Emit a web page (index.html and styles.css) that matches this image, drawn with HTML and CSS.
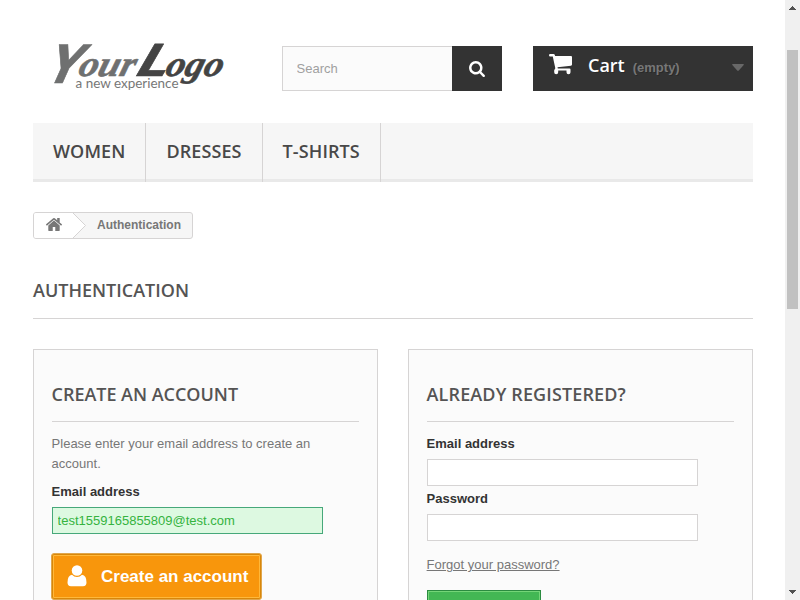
FILE: index.html
```html
<!DOCTYPE html>
<html lang="en">
<head>
<meta charset="utf-8">
<title>Login - My Store</title>
<link rel="stylesheet" href="styles.css">
</head>
<body>
<div class="page">
  <header class="header">
    <a class="logo" aria-label="YourLogo">
      <svg width="200" height="70" viewBox="0 0 200 70">
        <g class="logo-your">
          <text class="logo-cap" transform="translate(9 53) skewX(-24)" font-size="54" textLength="33" lengthAdjust="spacingAndGlyphs">Y</text>
          <text class="logo-low" transform="translate(44 46) skewX(-16)" textLength="56" lengthAdjust="spacingAndGlyphs">our</text>
        </g>
        <g class="logo-logo">
          <text class="logo-cap logo-l" transform="translate(98 46) skewX(-30)" font-size="45" textLength="33" lengthAdjust="spacingAndGlyphs">L</text>
          <text class="logo-low" transform="translate(131 46) skewX(-16)" textLength="57" lengthAdjust="spacingAndGlyphs">ogo</text>
        </g>
        <text class="logo-tag" x="42.500" y="58" textLength="103" lengthAdjust="spacingAndGlyphs">a new experience</text>
      </svg>
    </a>
    <form class="search">
      <input class="search-input" type="text" placeholder="Search">
      <button class="search-button" type="button" aria-label="Search">
        <svg width="16" height="16" viewBox="60 120 1670 1672"><path fill="#fff" d="M1216 832q0-185-131.500-316.500t-316.500-131.500-316.500 131.500-131.500 316.500 131.500 316.500 316.500 131.500 316.500-131.500 131.500-316.500zm512 832q0 52-38 90t-90 38q-54 0-90-38l-343-342q-179 124-399 124-143 0-273.500-55.500t-225-150-150-225-55.500-273.500 55.500-273.500 150-225 225-150 273.500-55.500 273.500 55.500 225 150 150 225 55.500 273.500q0 220-124 399l343 343q37 37 37 90z"/></svg>
      </button>
    </form>
    <a class="cart">
      <svg class="cart-icon" width="24" height="21" viewBox="0 0 24 21"><path fill="#fff" d="M1.200 0H4.500Q5.600 0 5.900 1.200L6.100 2H22Q23 2 23 3V10.500Q23 11.500 22 11.700L8.500 13.200L8.800 14.500H20.500Q21.500 14.500 21.500 15.500V18.200A2 2 0 0 1 17.500 18.200V16.500H9.200V18.200A2 2 0 0 1 5.200 18.200V16.200L6.300 14.300L3.800 2.400H1.200A1.200 1.200 0 0 1 1.200 0Z"/></svg>
      <b class="cart-label">Cart</b>
      <span class="cart-count">(empty)</span>
      <svg class="cart-arrow" width="12" height="7" viewBox="0 0 12 7"><path fill="#686868" d="M.3 0H11.700V1L6.800 6.500Q6 7.200 5.200 6.500L.3 1Z"/></svg>
    </a>
  </header>

  <nav class="menu">
    <a class="menu-item">WOMEN</a>
    <a class="menu-item">DRESSES</a>
    <a class="menu-item">T-SHIRTS</a>
  </nav>

  <div class="breadcrumb">
    <a class="crumb-home" aria-label="Home">
      <svg width="16" height="13" viewBox="89 253 1614 1283" preserveAspectRatio="none"><path fill="#777" d="M1472 992v480q0 26-19 45t-45 19h-384v-384h-256v384h-384q-26 0-45-19t-19-45v-480q0-1 .5-3t.5-3l575-474 575 474q1 2 1 6zm223-69l-62 74q-8 9-21 11h-3q-13 0-21-7l-692-577-692 577q-12 8-24 7-13-2-21-11l-62-74q-8-10-7-23.500t11-21.500l719-599q32-26 76-26t76 26l244 204v-195q0-14 9-23t23-9h192q14 0 23 9t9 23v408l219 182q10 8 11 21.500t-7 23.500z"/></svg>
    </a>
    <svg class="crumb-arrow" width="13" height="25" viewBox="0 0 13 25"><path fill="#fff" d="M0 0L12.500 12.500L0 25Z"/><path fill="none" stroke="#d6d4d4" d="M0 0L12.500 12.500L0 25"/></svg>
    <span class="crumb-current">Authentication</span>
  </div>

  <h1 class="heading">AUTHENTICATION</h1>

  <div class="columns">
    <form class="box">
      <h3 class="heading subheading">CREATE AN ACCOUNT</h3>
      <p class="intro">Please enter your email address to create an account.</p>
      <label class="label" for="new-email">Email address</label>
      <input class="field field-valid" id="new-email" type="text" value="test1559165855809@test.com">
      <button class="create" type="button">
        <svg width="20" height="22" viewBox="0 0 20 22"><circle cx="10" cy="5.500" r="5.300" fill="#fff"/><path fill="#fff" d="M5 9.800Q7 12 10 12Q13 12 15 9.800Q19.500 10.400 19.500 17.500Q19.500 21.200 16 21.200H4Q.5 21.200 .5 17.500Q.5 10.400 5 9.800Z"/></svg>
        <span>Create an account</span>
      </button>
    </form>
    <form class="box">
      <h3 class="heading subheading subheading-wide">ALREADY REGISTERED?</h3>
      <label class="label" for="email">Email address</label>
      <input class="field" id="email" type="text">
      <label class="label label-next" for="password">Password</label>
      <input class="field" id="password" type="password">
      <a class="forgot">Forgot your password?</a>
      <button class="signin" type="button" aria-label="Submit"></button>
    </form>
  </div>
</div>
<div class="scrollbar">
  <svg class="scroll-arrow" width="7" height="4" viewBox="0 0 7 4" shape-rendering="crispEdges"><path fill="#505050" d="M3 0h1v1h1v1h1v1h1v1H0V3h1V2h1V1h1z"/></svg>
  <div class="thumb"></div>
  <svg class="scroll-arrow" width="7" height="4" viewBox="0 0 7 4" shape-rendering="crispEdges"><path fill="#505050" d="M0 0h7v1H6v1H5v1H4v1H3V3H2V2H1V1H0z"/></svg>
</div>
</body>
</html>
```
FILE: styles.css
```css
* { box-sizing: border-box; }

body {
  margin: 0;
  display: grid;
  grid-template-columns: 785px 15px;
  height: 600px;
  overflow: hidden;
  background: #fff;
  color: #777;
  font: 13px/20px "Liberation Sans", Arial, sans-serif;
}

.page {
  height: 600px;
  overflow: hidden;
  padding: 30px 32px 0 33px;
}

.header {
  display: flex;
  align-items: flex-start;
  height: 93px;
}

.logo { width: 249px; height: 70px; }
.logo svg { display: block; overflow: visible; }
.logo-cap { font-family: "Open Sans", sans-serif; font-weight: 700; }
.logo-low { font: italic 700 36px "Liberation Serif", serif; stroke-width: .6px; }
.logo-your { fill: #6f7070; stroke: #6f7070; }
.logo-logo { fill: #444; stroke: #444; }
.logo-cap { stroke-width: .6px; stroke-linejoin: round; }
.logo-tag { font: 12.5px Lato, sans-serif; fill: #777; }

.search {
  display: flex;
  width: 220px;
  height: 45px;
  margin: 16px 31px 0 0;
}
.search-input {
  width: 170px;
  height: 45px;
  padding: 0 13.5px;
  border: 1px solid #d6d4d4;
  border-right: 0;
  background: #fbfbfb;
  font: 13px "Liberation Sans", Arial, sans-serif;
}
.search-input::placeholder { color: #a0a0a0; }
.search-button {
  display: flex;
  align-items: center;
  justify-content: center;
  width: 50px;
  padding: 0;
  border: 0;
  background: #333;
}

.cart {
  display: flex;
  align-items: flex-start;
  width: 220px;
  height: 45px;
  margin-top: 16px;
  padding: 8px 9px 0 16px;
  background: #333;
  text-shadow: 1px 1px rgba(0, 0, 0, .2);
}
.cart-label {
  margin: -1px 0 0 15px;
  color: #fff;
  font: 600 18px/24px "Open Sans", sans-serif;
}
.cart-count {
  margin: 4px 0 0 8px;
  color: #777;
  font-weight: 700;
}
.cart-arrow { margin: 10px 0 0 auto; }

.menu {
  display: flex;
  height: 59px;
  background: #f6f6f6;
  box-shadow: inset 0 -3px #e9e9e9;
}
.menu-item {
  height: 59px;
  padding: 17px 20px 0;
  border-right: 1px solid #d6d4d4;
  color: #484848;
  font: 600 18px/22px "Open Sans", sans-serif;
  letter-spacing: .1px;
}

.breadcrumb {
  display: flex;
  width: 160px;
  height: 27px;
  margin-top: 30px;
  overflow: hidden;
  border: 1px solid #d6d4d4;
  border-radius: 3px;
  background: #f6f6f6;
}
.crumb-home {
  width: 39px;
  padding: 5px 0 0 12px;
  background: #fff;
}
.crumb-home svg { display: block; }
.crumb-current {
  margin-left: 11px;
  font-size: 12px;
  font-weight: 700;
  line-height: 24px;
}

.heading {
  margin: 40px 0 30px;
  padding-bottom: 17px;
  border-bottom: 1px solid #d6d4d4;
  color: #555454;
  font: 600 18px/22px "Open Sans", sans-serif;
}

.columns {
  display: grid;
  grid-template-columns: 345px 345px;
  gap: 30px;
}
.box {
  display: flex;
  flex-direction: column;
  align-items: flex-start;
  height: 310px;
  padding: 33px 18px 0 17.6px;
  border: 1px solid #d6d4d4;
  background: #fbfbfb;
}
.subheading {
  width: 100%;
  margin: 0 0 12px;
  padding-bottom: 16px;
  letter-spacing: -.03px;
}
.subheading-wide { letter-spacing: .13px; }
.intro { margin: 0 0 8px; }
.label {
  color: #333;
  font-weight: 700;
  line-height: 20px;
}
.field {
  width: 271px;
  height: 27px;
  margin-top: 5px;
  padding: 0 5px;
  border: 1px solid #d6d4d4;
  background: #fff;
  font: 13px "Liberation Sans", Arial, sans-serif;
}
.field-valid {
  border-color: #46a87a;
  background: #ddf9e1;
  color: #35b33f;
}
.label-next { margin-top: 3px; }

.create {
  display: flex;
  align-items: center;
  gap: 14px;
  width: 211px;
  height: 47px;
  margin: 19px 0 0 -.6px;
  padding: 0 0 1px 15px;
  border: 1px solid #e0a64c;
  border-radius: 3px;
  background: #f8960c;
  box-shadow: inset 0 0 0 1px #d8870a, inset 0 0 0 2px #ffb83a;
  color: #fff;
  font: 700 17px/21px "Liberation Sans", Arial, sans-serif;
  white-space: nowrap;
}
.forgot { margin-top: 14px; text-decoration: underline; }
.signin {
  width: 114px;
  height: 36px;
  margin-top: 15px;
  border: 1px solid #2b8b40;
  background: #43b754;
  box-shadow: inset 0 0 0 1px #74d578;
}

.scrollbar {
  display: flex;
  flex-direction: column;
  align-items: center;
  height: 600px;
  padding: 6px 0;
  background: #f0f0f0;
}
.thumb {
  width: 11px;
  height: 259px;
  margin: 40px 0 auto;
  background: #c1c1c1;
}
```
